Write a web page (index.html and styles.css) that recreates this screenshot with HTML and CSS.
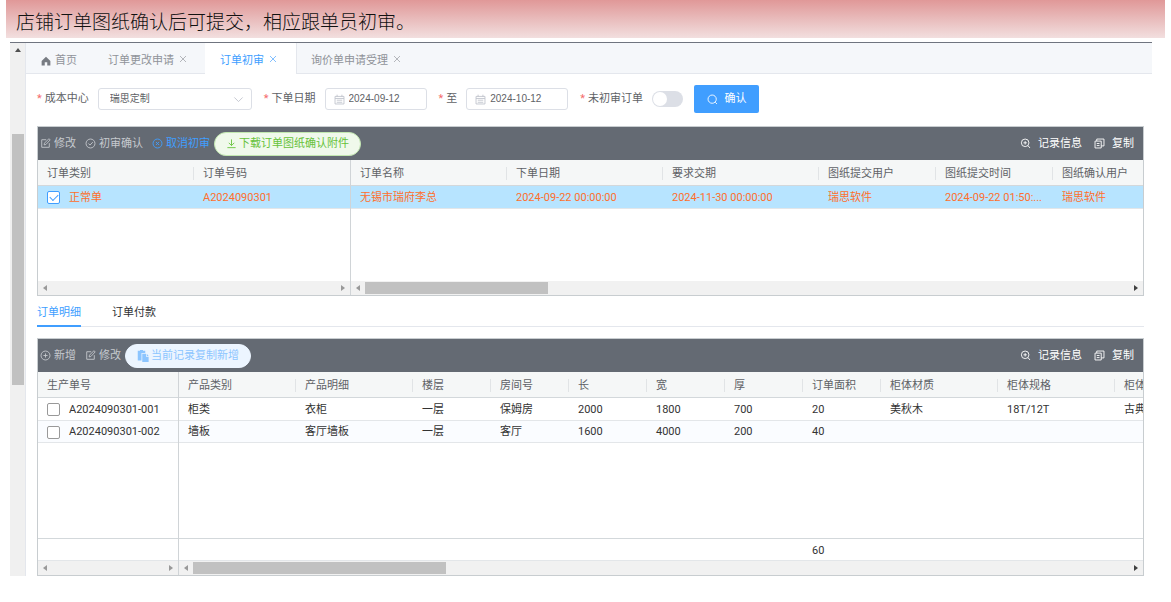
FILE: index.html
```html
<!DOCTYPE html>
<html lang="zh-CN">
<head>
  <meta charset="UTF-8">
  <meta name="viewport" content="width=device-width, initial-scale=1">
  <title>订单初审</title>
  <link rel="stylesheet" href="styles.css">
</head>
<body>
  <svg class="sprite" aria-hidden="true">
    <symbol id="i-edit" viewBox="0 0 16 16"><path d="M13.5 7.5v6h-11v-11h6.500M6 10l.5-2.500L13 1l1.800 1.800L8.500 9.500z"/></symbol>
    <symbol id="i-check" viewBox="0 0 16 16"><circle cx="8" cy="8" r="6.500"/><path d="M5 8l2.300 2.300L11.300 6"/></symbol>
    <symbol id="i-cancel" viewBox="0 0 16 16"><circle cx="8" cy="8" r="6.500"/><path d="M5.800 5.800l4.400 4.400M10.200 5.800l-4.400 4.400"/></symbol>
    <symbol id="i-plus" viewBox="0 0 16 16"><circle cx="8" cy="8" r="6.500"/><path d="M5 8h6M8 5v6"/></symbol>
    <symbol id="i-down" viewBox="0 0 16 16"><path d="M8 2v9M4 7l4 4 4-4M2 14h12"/></symbol>
    <symbol id="i-zoom" viewBox="0 0 16 16"><circle cx="7.500" cy="7" r="5.500"/><path d="M5 7h5M7.500 4.500v5M11.500 11l3 3.500"/></symbol>
    <symbol id="i-search" viewBox="0 0 16 16"><circle cx="7.500" cy="7.500" r="6"/><path d="M12 12l2.500 2.500"/></symbol>
    <symbol id="i-copy" viewBox="0 0 16 16"><path d="M1.500 4.500h9v10h-9zM4 4.500v-3h10.500v10h-4M4 8h4M4 11h4"/></symbol>
    <symbol id="i-date" viewBox="0 0 16 16"><path d="M1.500 3.500h13v11h-13zM1.500 6.500h13M4.500 1v3M11.500 1v3M4 9h8M4 12h8"/></symbol>
    <symbol id="i-x" viewBox="0 0 16 16"><path d="M2 2l12 12M14 2L2 14"/></symbol>
  </svg>

  <header class="banner">店铺订单图纸确认后可提交，相应跟单员初审。</header>

  <div class="window">
    <div class="page-scroll">
      <i class="arrow up"></i>
      <i class="gap-top"></i>
      <i class="thumb"></i>
      <i class="gap-bottom"></i>
    </div>

    <main class="main">
      <nav class="page-tabs">
        <a class="page-tab home" href="#">
          <svg class="home-icon" viewBox="0 0 16 16"><path d="M8 1L1 8v7h5v-5h4v5h5V8z"/></svg>首页
        </a>
        <a class="page-tab" href="#">订单更改申请<svg class="close"><use href="#i-x"/></svg></a>
        <a class="page-tab active" href="#">订单初审<svg class="close"><use href="#i-x"/></svg></a>
        <a class="page-tab" href="#">询价单申请受理<svg class="close"><use href="#i-x"/></svg></a>
      </nav>

      <form class="filter">
        <label for="center">成本中心</label>
        <div class="field select">
          <select id="center"><option>瑞思定制</option></select>
          <svg class="chevron" viewBox="0 0 16 16"><path d="M2 5l6 6 6-6"/></svg>
        </div>
        <label for="from">下单日期</label>
        <div class="field date">
          <svg class="icon"><use href="#i-date"/></svg>
          <input id="from" type="text" value="2024-09-12">
        </div>
        <label for="to">至</label>
        <div class="field date">
          <svg class="icon"><use href="#i-date"/></svg>
          <input id="to" type="text" value="2024-10-12">
        </div>
        <label for="unchecked">未初审订单</label>
        <input class="switch" id="unchecked" type="checkbox">
        <button class="confirm" type="button"><svg class="icon"><use href="#i-search"/></svg>确认</button>
      </form>

      <section class="grid orders">
        <div class="toolbar">
          <button class="tool"><svg class="icon"><use href="#i-edit"/></svg>修改</button>
          <button class="tool"><svg class="icon"><use href="#i-check"/></svg>初审确认</button>
          <button class="tool blue"><svg class="icon"><use href="#i-cancel"/></svg>取消初审</button>
          <button class="pill green"><svg class="icon"><use href="#i-down"/></svg>下载订单图纸确认附件</button>
          <div class="tools-right">
            <button class="tool"><svg class="icon"><use href="#i-zoom"/></svg>记录信息</button>
            <button class="tool"><svg class="icon"><use href="#i-copy"/></svg>复制</button>
          </div>
        </div>
        <div class="panes">
          <div class="pane fixed">
            <div class="pane-body">
              <table>
                <colgroup><col class="w156"><col class="w156"></colgroup>
                <thead><tr><th>订单类别</th><th>订单号码</th></tr></thead>
                <tbody>
                  <tr class="selected"><td><label class="pick"><input type="checkbox" checked>正常单</label></td><td>A2024090301</td></tr>
                </tbody>
              </table>
            </div>
            <div class="hscroll"><i class="arrow left"></i><i class="track"></i><i class="arrow right"></i></div>
          </div>
          <div class="pane wide">
            <div class="pane-body">
              <table>
                <colgroup><col class="w156"><col class="w156"><col class="w156"><col class="w117"><col class="w117"><col class="w117"></colgroup>
                <thead><tr><th>订单名称</th><th>下单日期</th><th>要求交期</th><th>图纸提交用户</th><th>图纸提交时间</th><th>图纸确认用户</th></tr></thead>
                <tbody>
                  <tr class="selected"><td>无锡市瑞府李总</td><td>2024-09-22 00:00:00</td><td>2024-11-30 00:00:00</td><td>瑞思软件</td><td>2024-09-22 01:50:...</td><td>瑞思软件</td></tr>
                </tbody>
              </table>
            </div>
            <div class="hscroll"><i class="arrow left"></i><i class="track"><i class="thumb"></i></i><i class="arrow right dark"></i></div>
          </div>
        </div>
      </section>

      <nav class="sub-tabs">
        <a class="active" href="#">订单明细</a>
        <a href="#">订单付款</a>
      </nav>

      <section class="grid details">
        <div class="toolbar">
          <button class="tool"><svg class="icon"><use href="#i-plus"/></svg>新增</button>
          <button class="tool"><svg class="icon"><use href="#i-edit"/></svg>修改</button>
          <button class="pill light">
            <svg class="paste" viewBox="0 0 16 16"><path d="M1 1h3V0h4v1h3v3H6v10H1z"/><path d="M7 5h5v4h3.500v7H7z"/><path d="M13 5l2.500 3H13z"/></svg>当前记录复制新增
          </button>
          <div class="tools-right">
            <button class="tool"><svg class="icon"><use href="#i-zoom"/></svg>记录信息</button>
            <button class="tool"><svg class="icon"><use href="#i-copy"/></svg>复制</button>
          </div>
        </div>
        <div class="panes">
          <div class="pane fixed">
            <div class="pane-body">
              <table>
                <colgroup><col class="w140"></colgroup>
                <thead><tr><th>生产单号</th></tr></thead>
                <tbody>
                  <tr><td><label class="pick"><input type="checkbox">A2024090301-001</label></td></tr>
                  <tr><td><label class="pick"><input type="checkbox">A2024090301-002</label></td></tr>
                </tbody>
              </table>
            </div>
            <div class="total"></div>
            <div class="hscroll"><i class="arrow left"></i><i class="track"></i><i class="arrow right"></i></div>
          </div>
          <div class="pane wide">
            <div class="pane-body">
              <table>
                <colgroup><col class="w117"><col class="w117"><col class="w78"><col class="w78"><col class="w78"><col class="w78"><col class="w78"><col class="w78"><col class="w117"><col class="w117"><col class="w117"></colgroup>
                <thead><tr><th>产品类别</th><th>产品明细</th><th>楼层</th><th>房间号</th><th>长</th><th>宽</th><th>厚</th><th>订单面积</th><th>柜体材质</th><th>柜体规格</th><th>柜体</th></tr></thead>
                <tbody>
                  <tr><td>柜类</td><td>衣柜</td><td>一层</td><td>保姆房</td><td>2000</td><td>1800</td><td>700</td><td>20</td><td>美秋木</td><td>18T/12T</td><td>古典</td></tr>
                  <tr><td>墙板</td><td>客厅墙板</td><td>一层</td><td>客厅</td><td>1600</td><td>4000</td><td>200</td><td>40</td><td></td><td></td><td></td></tr>
                </tbody>
              </table>
            </div>
            <div class="total">
              <table>
                <colgroup><col class="w117"><col class="w117"><col class="w78"><col class="w78"><col class="w78"><col class="w78"><col class="w78"><col class="w78"><col class="w117"><col class="w117"><col class="w117"></colgroup>
                <tbody><tr><td colspan="7"></td><td>60</td><td colspan="3"></td></tr></tbody>
              </table>
            </div>
            <div class="hscroll"><i class="arrow left"></i><i class="track"><i class="thumb"></i></i><i class="arrow right dark"></i></div>
          </div>
        </div>
      </section>
    </main>
  </div>
</body>
</html>
```
FILE: styles.css
```css
* {
  box-sizing: border-box;
}
body {
  margin: 0;
  padding: 0 6px;
  background: #fff;
  color: #333;
  font: 11px/16px Roboto, "Noto Sans CJK SC", sans-serif;
}
a {
  color: inherit;
  text-decoration: none;
}
button, input, select {
  margin: 0;
  font: inherit;
  color: inherit;
}
button {
  padding: 0;
  border: 0;
  background: none;
  white-space: nowrap;
  cursor: pointer;
}
.sprite {
  display: none;
}
.icon, .close, .chevron {
  width: 11px;
  height: 11px;
  flex: none;
  fill: none;
  stroke: currentColor;
  stroke-width: 1.3;
}

.banner {
  height: 38px;
  padding-left: 10px;
  background: linear-gradient(#e09898, #f2dfdf);
  color: #111;
  font-family: "Noto Sans CJK SC", serif;
  font-size: 19px;
  font-weight: 300;
  line-height: 42px;
  white-space: nowrap;
  overflow: hidden;
}
.window {
  display: flex;
  margin: 4px 13px 0 4px;
  border-top: 1px solid #6f747f;
}

/* scrollbars */
.page-scroll {
  display: flex;
  flex-direction: column;
  align-items: center;
  width: 16px;
  padding-top: 5px;
  background: #f0f0f0;
  border-right: 1px solid #e4e7ed;
}
.page-scroll .gap-top { flex: 82; }
.page-scroll .thumb { flex: 250; width: 12px; background: #c1c1c1; }
.page-scroll .gap-bottom { flex: 190; }
.arrow {
  flex: none;
  border: 3px solid transparent;
}
.arrow.up { border-top: 0; border-bottom: 4px solid #505050; }
.arrow.left { border-left: 0; border-right: 4px solid #999; }
.arrow.right { border-right: 0; border-left: 4px solid #999; }
.arrow.right.dark { border-left-color: #404040; }
.hscroll {
  display: flex;
  align-items: center;
  gap: 5px;
  height: 14px;
  padding: 0 5px;
  background: #f1f1f1;
}
.track {
  flex: 1;
}
.track .thumb {
  display: block;
  height: 12px;
  background: #c1c1c1;
}
.orders .thumb { width: 24%; }
.details .thumb { width: 27%; }

.main {
  flex: 1;
  min-width: 0;
}

.page-tabs {
  display: flex;
  height: 31px;
  background: #f5f7fa;
  border-bottom: 1px solid #e4e7ed;
  color: #909399;
}
.page-tab {
  display: flex;
  align-items: center;
  gap: 5px;
  height: 31px;
  padding: 4px 17px 0 15px;
  white-space: nowrap;
  border-right: 1px solid transparent;
}
.page-tab.home {
  gap: 4px;
  padding-right: 15px;
}
.page-tab .close {
  width: 8px;
  height: 8px;
  margin-bottom: 4px;
}
.page-tab.active {
  padding-right: 19px;
  background: #fff;
  color: #409eff;
  border-right-color: #e4e7ed;
}
.page-tab.active + .page-tab { padding-left: 14px; }
.home-icon {
  width: 10px;
  height: 10px;
  fill: #777b82;
}

.filter {
  display: flex;
  align-items: center;
  height: 52px;
  padding: 0 11px 2px;
  color: #606266;
  white-space: nowrap;
}
.filter label::before {
  content: "*";
  margin-right: 3px;
  color: #f56c6c;
}
.field {
  display: flex;
  align-items: center;
  width: 102px;
  height: 22px;
  margin: 0 12px 0 9px;
  padding: 0 8px;
  border: 1px solid #dcdfe6;
  border-radius: 3px;
  font-size: 10px;
}
.field.select {
  width: 154px;
  padding: 0 7px 0 11px;
}
.field select, .field input {
  flex: 1;
  min-width: 0;
  border: 0;
  padding: 0;
  outline: 0;
  background: none;
  appearance: none;
}
.field input {
  padding-left: 4px;
  font-family: "Liberation Sans", sans-serif;
}
.field .icon, .chevron {
  color: #c0c4cc;
}
.switch {
  width: 31px;
  height: 16px;
  margin: 0 11px 0 9px;
  padding: 1px;
  appearance: none;
  border-radius: 8px;
  background: #dcdfe6;
}
.switch::before {
  content: "";
  display: block;
  width: 14px;
  height: 14px;
  border-radius: 50%;
  background: #fff;
}
.switch:checked { background: #409eff; }
.switch:checked::before { margin-left: auto; }
.confirm {
  display: flex;
  align-items: center;
  justify-content: center;
  gap: 7px;
  width: 65px;
  height: 28px;
  border-radius: 2px;
  background: #409eff;
  color: #fff;
}

/* grids */
.grid {
  margin: 0 8px 0 11px;
  border: 1px solid #c8cdd0;
}
.toolbar {
  display: flex;
  align-items: center;
  gap: 9px;
  height: 33px;
  padding: 0 9px 0 2px;
  background: #646a73;
  color: #c6c9ce;
}
.tool {
  display: flex;
  align-items: center;
  gap: 3px;
}
.tool.blue { color: #409eff; }
.tools-right {
  display: flex;
  gap: 12px;
  margin-left: auto;
  color: #fff;
}
.tools-right .tool { gap: 7px; }
.pill {
  display: flex;
  align-items: center;
  gap: 2px;
  height: 24px;
  margin-left: -5px;
  padding: 0 11px;
  border: 1px solid #c2e7b0;
  border-radius: 12px;
  background: #f0f9eb;
  color: #67c23a;
}
.pill.light {
  border-color: #ecf5ff;
  background: #ecf5ff;
  color: #8cc5ff;
}
.paste {
  width: 12px;
  height: 12px;
  fill: currentColor;
}
.panes {
  display: flex;
}
.pane.fixed {
  flex: none;
  border-right: 1px solid #d0d4d7;
}
.pane.wide {
  flex: 1;
  min-width: 0;
}
.pane-body {
  overflow: hidden;
  background: linear-gradient(#f5f7f7 25px, #d3d8db 25px, #d3d8db 26px, #fff 26px);
}
.orders .pane-body { height: 121px; }
.details .pane-body { height: 166px; }
table {
  width: 0;
  table-layout: fixed;
  border-collapse: collapse;
}
.w78 { width: 78px; }
.w117 { width: 117px; }
.w140 { width: 140px; }
.w156 { width: 156px; }
th, td {
  padding: 2px 0 0 9px;
  text-align: left;
  font-weight: normal;
  white-space: nowrap;
  overflow: hidden;
}
th {
  height: 26px;
  color: #606266;
  background: linear-gradient(#e1e4e6, #e1e4e6) right 0 center / 1px 13px no-repeat;
}
th:last-child { background: none; }
td {
  height: 22px;
  border-bottom: 1px solid #e3e6e9;
}
tbody tr:nth-child(2) { background: #fafcff; }
.selected {
  background: #b7e4ff;
  color: #ff6f2c;
}
.pick {
  display: flex;
  align-items: center;
  gap: 9px;
}
.pick input {
  display: grid;
  place-items: center;
  width: 13px;
  height: 13px;
  appearance: none;
  border: 1px solid #999;
  border-radius: 2px;
  background: #fff;
}
.pick input:checked { border-color: #409eff; }
.pick input:checked::before {
  content: "";
  width: 7px;
  height: 4px;
  margin-bottom: 2px;
  border: solid #409eff;
  border-width: 0 0 1px 1px;
  transform: rotate(-45deg);
}
.total {
  height: 23px;
  overflow: hidden;
  border-top: 1px solid #d3d8db;
  border-bottom: 1px solid #e3e6e9;
}
.total td { border: 0; }

.sub-tabs {
  display: flex;
  gap: 31px;
  height: 31px;
  margin: 0 8px 11px 11px;
  border-bottom: 1px solid #e4e7ed;
  color: #303133;
}
.sub-tabs a {
  height: 31px;
  padding-top: 9px;
}
.sub-tabs .active {
  color: #409eff;
  border-bottom: 2px solid #409eff;
}
```
